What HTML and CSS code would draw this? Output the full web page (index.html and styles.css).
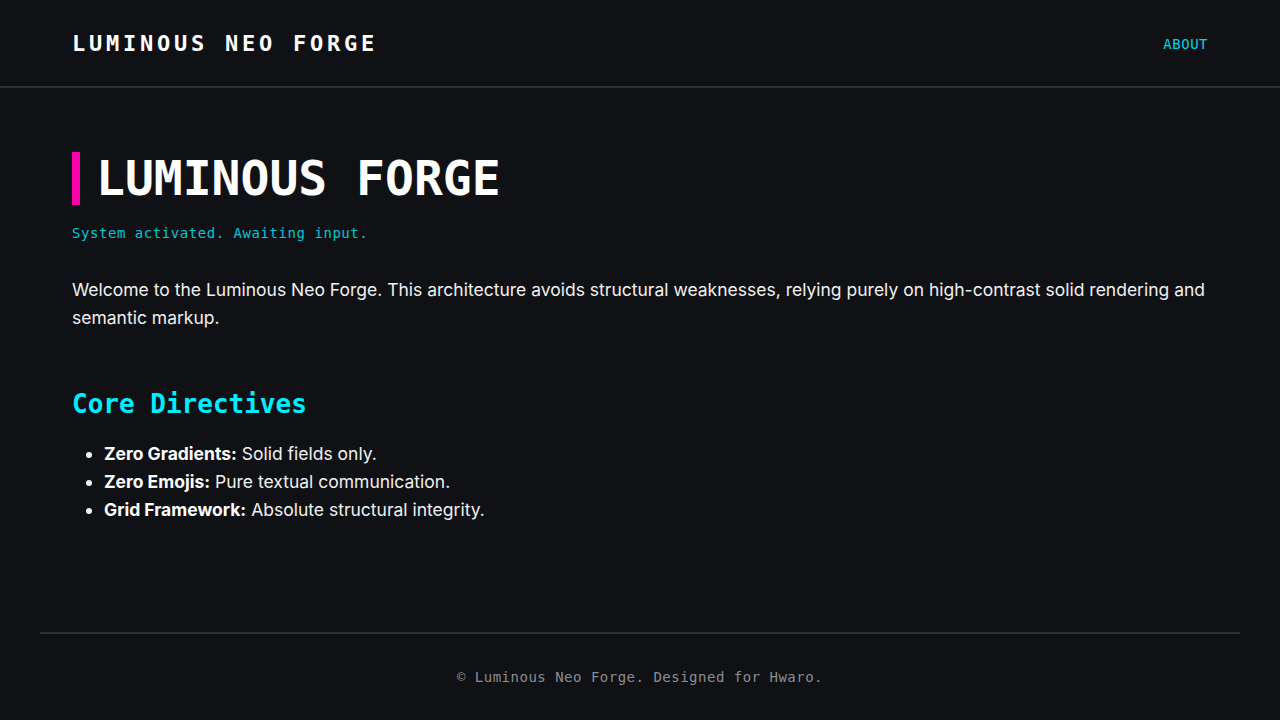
FILE: index.html
```html
<!DOCTYPE html>
<html lang="en">
<head>
<meta charset="utf-8">
<title>Luminous Neo Forge</title>
<link rel="stylesheet" href="styles.css">
</head>
<body>
<header class="site-header">
  <div class="header-inner">
    <a class="brand" href="#">LUMINOUS NEO FORGE</a>
    <nav class="nav"><a href="#">ABOUT</a></nav>
  </div>
</header>
<main class="main">
  <h1 class="hero-title">LUMINOUS FORGE</h1>
  <p class="status">System activated. Awaiting input.</p>
  <p class="intro">Welcome to the Luminous Neo Forge. This architecture avoids structural weaknesses, relying purely on high-contrast solid rendering and semantic markup.</p>
  <h2 class="section-title">Core Directives</h2>
  <ul class="directives">
    <li><strong>Zero Gradients:</strong> Solid fields only.</li>
    <li><strong>Zero Emojis:</strong> Pure textual communication.</li>
    <li><strong>Grid Framework:</strong> Absolute structural integrity.</li>
  </ul>
</main>
<footer class="site-footer">
  <p>© Luminous Neo Forge. Designed for Hwaro.</p>
</footer>
</body>
</html>
```
FILE: styles.css
```css
* { box-sizing: border-box; }
html, body { margin: 0; padding: 0; }
body {
  background: #101115;
  color: #eeeeee;
  font-family: Inter, "Noto Sans", sans-serif;
  min-height: 100vh;
  display: flex;
  flex-direction: column;
}
a { text-decoration: none; }

.site-header {
  border-bottom: 2px solid #2b3038;
}
.header-inner {
  max-width: 1200px;
  margin: 0 auto;
  height: 86px;
  padding: 0 32px;
  display: flex;
  align-items: center;
  justify-content: space-between;
}
.brand {
  font-family: "DejaVu Sans Mono", "Liberation Mono", monospace;
  font-weight: 700;
  font-size: 22px;
  letter-spacing: 3.75px;
  color: #ffffff;
}
.nav a {
  font-family: "DejaVu Sans Mono", monospace;
  font-size: 14px;
  letter-spacing: 0.5px;
  color: #00d2e0;
}

.main {
  flex: 1;
  width: 100%;
  max-width: 1200px;
  margin: 0 auto;
  padding: 64px 32px 0;
}
.hero-title {
  margin: 0;
  font-family: "DejaVu Sans Mono", "Liberation Mono", monospace;
  font-weight: 700;
  font-size: 48px;
  line-height: 53px;
  color: #ffffff;
  border-left: 8px solid #ff00aa;
  padding-left: 16px;
}
.status {
  margin: 18px 0 0;
  font-family: "DejaVu Sans Mono", monospace;
  font-size: 14px;
  line-height: 20px;
  letter-spacing: 0.55px;
  color: #00c8d6;
}
.intro {
  margin: 33px 0 0;
  font-size: 17.5px;
  line-height: 28px;
  color: #f0f0f0;
}
.section-title {
  margin: 55px 0 0;
  font-family: "DejaVu Sans Mono", "Liberation Mono", monospace;
  font-weight: 700;
  font-size: 26px;
  line-height: 34px;
  color: #00eeff;
}
.directives {
  margin: 19px 0 0;
  padding-left: 32px;
  font-size: 17.5px;
  line-height: 28px;
  color: #f0f0f0;
}
.directives strong { color: #ffffff; font-weight: 700; }

.site-footer {
  width: calc(100% - 80px);
  max-width: 1200px;
  margin: 0 auto;
  border-top: 2px solid #2b3038;
  padding: 33px 0 33px;
  text-align: center;
}
.site-footer p {
  margin: 0;
  font-family: "DejaVu Sans Mono", monospace;
  font-size: 14px;
  line-height: 20px;
  letter-spacing: 0.5px;
  color: #8a8d92;
}
```
